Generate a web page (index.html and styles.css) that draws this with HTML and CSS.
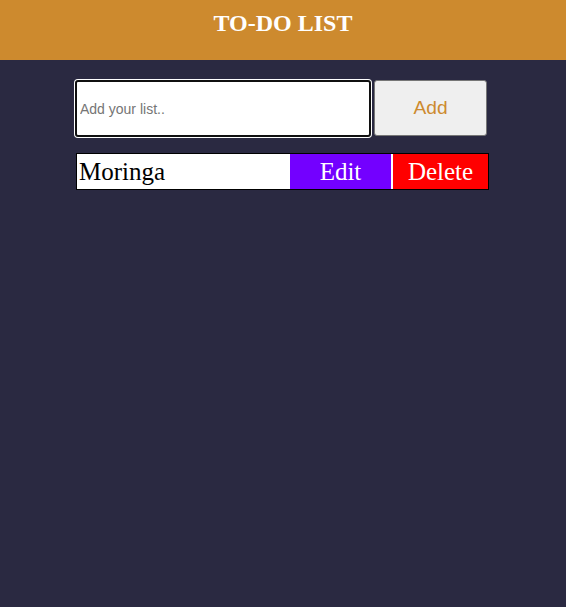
FILE: index.html
```html
<!DOCTYPE html>
<html lang="en">
<head>
<meta charset="utf-8">
<title>To-Do List</title>
<link rel="stylesheet" href="styles.css">
</head>
<body>
<header class="header">
  <h1 class="title">TO-DO LIST</h1>
</header>
<main class="main">
  <form class="add-form">
    <input class="add-input" type="text" placeholder="Add your list..">
    <button class="add-btn" type="button">Add</button>
  </form>
  <ul class="list">
    <li class="item">
      <span class="item-text">Moringa</span>
      <button class="edit-btn" type="button">Edit</button>
      <button class="delete-btn" type="button">Delete</button>
    </li>
  </ul>
</main>
</body>
</html>
```
FILE: styles.css
```css
html, body {
  margin: 0;
  padding: 0;
  height: 100%;
}
body {
  background: #2a2941;
  font-family: "Liberation Serif", "Times New Roman", serif;
}
.header {
  background: #cd8a2e;
  height: 60px;
  display: flex;
  justify-content: center;
  padding-top: 9px;
  box-sizing: border-box;
}
.title {
  margin: 0;
  color: #ffffff;
  font-size: 24px;
  font-weight: bold;
  line-height: 28px;
}
.main {
  width: 414px;
  margin: 0 auto;
  padding-top: 20px;
}
.add-form {
  display: flex;
  gap: 3px;
  width: 412px;
  margin-left: -1px;
}
.add-input {
  width: 296px;
  height: 57px;
  box-sizing: border-box;
  border: 2px solid #101010;
  outline: none;
  margin: 0;
  border-radius: 3px;
  box-shadow: 0 0 0 1px #ffffff;
  background: #ffffff;
  font-family: "Liberation Sans", Arial, sans-serif;
  font-size: 14px;
  padding: 0 3px;
}
.add-input::placeholder {
  color: #757575;
}
.add-btn {
  width: 113px;
  height: 56px;
  margin: 0;
  box-sizing: border-box;
  background: #efefef;
  border: 1px solid #767676;
  border-radius: 3px;
  color: #cd8a2e;
  font-family: "Liberation Sans", Arial, sans-serif;
  font-size: 19.2px;
  padding: 0;
}
.list {
  list-style: none;
  margin: 16px 0 0 0;
  padding: 0;
  width: 413px;
}
.item {
  display: flex;
  height: 37px;
  box-sizing: border-box;
  border: 1px solid #000000;
  background: #ffffff;
}
.item-text {
  flex: 1;
  font-size: 25px;
  line-height: 35px;
  padding-left: 2px;
  color: #000000;
}
.edit-btn, .delete-btn {
  margin: 0;
  border: none;
  padding: 0;
  height: 35px;
  color: #ffffff;
  font-family: "Liberation Serif", "Times New Roman", serif;
  font-size: 25px;
}
.edit-btn {
  width: 101px;
  background: #7300ff;
}
.delete-btn {
  width: 95px;
  margin-left: 2px;
  background: #ff0000;
}
```
